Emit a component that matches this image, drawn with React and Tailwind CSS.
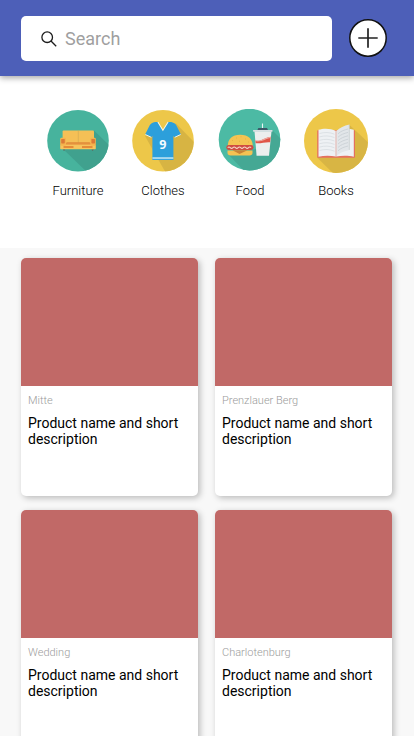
import React from "react";

function FurnitureIcon() {
  return (
    <svg viewBox="0 0 64 64" className="block h-16 w-16">
      <defs>
        <clipPath id="furnitureClip"><circle cx="32" cy="31.800" r="30.800" /></clipPath>
      </defs>
      <circle cx="32" cy="31.800" r="30.800" fill="#47b39d" />
      <path clipPath="url(#furnitureClip)" d="M48 21.5 L66 39 V66 H44 L17 40 Z" fill="#40a18e" />
      <path d="M17 40h2.200l-.8 2h-.8zM45.500 40h2.200l-.7 2h-.8z" fill="#56766b" />
      <rect x="16.600" y="21.400" width="31.400" height="15" rx="1" fill="#f5c056" />
      <path d="M32.300 21.500V34" stroke="#cfa653" strokeWidth=".6" />
      <path d="M19.500 34.200 21 33.200h22.500l1.500 1V37h-25.500z" fill="#e08a3a" />
      <rect x="20" y="34.700" width="25" height="1.300" fill="#eda348" />
      <rect x="14.200" y="36" width="35.600" height="4.200" rx=".6" fill="#f7c45c" />
      <rect x="14.200" y="28.800" width="5.800" height="8" rx="1.200" fill="#f5b34d" />
      <rect x="44.300" y="28.800" width="5.500" height="8" rx="1.200" fill="#f5b34d" />
      <rect x="15.200" y="29.900" width="3.600" height="4.600" rx=".7" fill="#dc7a36" />
      <rect x="45.400" y="29.900" width="3.600" height="4.600" rx=".7" fill="#dc7a36" />
      <path d="M17.500 37h10v2h-10zM36 37h10.500v2H36z" fill="#e58c38" />
    </svg>
  );
}

function ClothesIcon() {
  return (
    <svg viewBox="0 0 64 64" className="block h-16 w-16">
      <defs>
        <clipPath id="clothesClip"><circle cx="32" cy="31.800" r="30.800" /></clipPath>
      </defs>
      <circle cx="32" cy="31.800" r="30.800" fill="#edc749" />
      <path clipPath="url(#clothesClip)" d="M45 14.500 L66 36 V66 H36 L14 27 Z" fill="#d7b443" />
      <g transform="translate(.7 0)">
        <path d="M23.500 13h3l4.700 8.500L36 13h3.500c3 .7 4.700 2 5.700 4.500l4 8-6.200 2.800-1.300-1.300V51h-21V27l-1.300 1.300-6-2.800 4-8c1-2.500 3.100-4 6.100-4.500Z" fill="#2c9fdb" />
        <path d="m13.600 25.500 6 2.800M49 25.500l-6 2.800" stroke="#f5f4e4" strokeWidth="1" />
        <path d="m26.200 13 5 8.300 5.200-8.300" fill="none" stroke="#fff6dc" strokeWidth="1.100" />
        <path d="m27.300 12.900 3.900 6.300 4-6.300Z" fill="#edc749" />
        <rect x="20.700" y="48.100" width="21" height="2" fill="#a6d8ef" />
        <text x="31.200" y="39.800" textAnchor="middle" fontFamily="Open Sans, sans-serif" fontWeight="700" fontSize="12.500" fill="#f4fbff">9</text>
      </g>
    </svg>
  );
}

function FoodIcon() {
  return (
    <svg viewBox="0 0 64 64" className="block h-16 w-16">
      <defs>
        <clipPath id="foodClip"><circle cx="31.500" cy="30.600" r="30.800" /></clipPath>
      </defs>
      <circle cx="31.500" cy="30.600" r="30.800" fill="#4cbaa4" />
      <path clipPath="url(#foodClip)" d="M54 21 L66 33 V66 H30 L10 45 L38 40 Z" fill="#45a894" />
      <path d="M9.500 41.500h25v2.300c0 1.800-1.200 2.600-3 2.600h-19c-1.800 0-3-.8-3-2.600Z" fill="#f4c252" />
      <path d="M14.500 41.200h15L21.500 45z" fill="#c98335" />
      <path d="M9.800 37c0-7 4.200-11.300 12.400-11.300S34.700 30 34.700 37Z" fill="#f4c452" />
      <path d="M14 31.500h1M18 29h1M22.500 27.800h1M27 30h1M21 32.300h1M30 33h1" stroke="#e3ae44" strokeWidth=".8" />
      <rect x="8.300" y="36" width="27.200" height="5" rx="2.400" fill="#d04c42" />
      <path d="M9.700 38.700q1.300-1.400 2.600 0t2.600 0 2.600 0 2.600 0 2.600 0 2.600 0 2.600 0 2.600 0 2.600 0" fill="none" stroke="#f5d8c7" strokeWidth="1.100" />
      <path d="M44.500 14.500V19.500" stroke="#eaf5f4" strokeWidth="1.100" />
      <path d="M40.300 19h8.700l1 2H39.500z" fill="#3d5868" />
      <path d="M36.500 22.300h17l-2.500 24.400H38.600Z" fill="#eceeee" />
      <rect x="35" y="20.900" width="19.600" height="1.800" rx=".6" fill="#d7dfe3" />
      <path d="M37.300 31.500c5.700 1.500 8.700-2.900 15.400-3.800l-.6 5.600c-4.300-.5-9.200 1.400-14.400.9Z" fill="#e05548" />
      <path d="M37.300 31.500c5.700 1.500 8.700-2.900 15.400-3.800l-.1 1.300c-5 .7-8 4-15.100 3.300Z" fill="#eeaaa2" />
    </svg>
  );
}

function BooksIcon() {
  return (
    <svg viewBox="0 0 64 64" className="block h-16 w-16">
      <defs>
        <clipPath id="booksClip"><circle cx="32" cy="32" r="32" /></clipPath>
      </defs>
      <circle cx="32" cy="32" r="32" fill="#edc749" />
      <path clipPath="url(#booksClip)" d="M45 15.500 L68 37 V68 H33 L13 48.500 Z" fill="#d8b544" />
      <rect x="13.200" y="21.200" width="37.800" height="27.500" rx=".7" fill="#e4705f" />
      <path d="M14.500 20.800c5-1.700 12-1.700 17.500 1.200v25.600c-5.500-1.200-12-1.200-17.500.1ZM32 22c5.500-2.900 12.500-2.900 17.800-1.200v26.900c-5.300-1.300-12.300-1.300-17.800-.1Z" fill="#eef1f4" />
      <path d="M32.600 22c3-3.500 7.500-5.200 12.800-6.500v25.500c-4.500 1.200-9.500 2.300-12.800 6Z" fill="#e2e6e9" />
      <path d="M15.500 24.500c5-1.400 10-1.400 15 .7M15.500 27.900c5-1.400 10-1.400 15 .7M15.500 31.300c5-1.400 10-1.400 15 .7M15.500 34.700c5-1.400 10-1.400 15 .7M15.500 38.100c5-1.400 10-1.400 15 .7M15.500 41.500c5-1.400 10-1.400 15 .7" fill="none" stroke="#dce1e5" strokeWidth="1" />
      <path d="M34 24.800c3-2.800 6-3.700 10-4.800M34 28.200c3-2.800 6-3.700 10-4.800M34 31.600c3-2.800 6-3.700 10-4.800M34 35c3-2.800 6-3.700 10-4.800M34 38.400c3-2.800 6-3.700 10-4.800M34 41.800c3-2.800 6-3.700 10-4.800" fill="none" stroke="#cdd3d8" strokeWidth="1" />
      <path d="M45.300 15.700v25.200" stroke="#c3c8c9" strokeWidth=".7" />
      <path d="M32 22v26" stroke="#dda19b" strokeWidth=".8" />
    </svg>
  );
}

const categories = [
  { label: "Furniture", Icon: FurnitureIcon },
  { label: "Clothes", Icon: ClothesIcon },
  { label: "Food", Icon: FoodIcon },
  { label: "Books", Icon: BooksIcon },
];

const products = ["Mitte", "Prenzlauer Berg", "Wedding", "Charlotenburg"];

function ProductCard({ place }) {
  return (
    <article className="h-[238px] overflow-hidden rounded-[5px] bg-white shadow-[2px_2px_6px_rgba(0,0,0,0.25)]">
      <div className="h-32 bg-[#c16967]" />
      <div className="px-[7px] pt-2">
        <p className="text-[11px] leading-[14px] font-light text-[#9b9b9b]">{place}</p>
        <h2 className="mt-[7px] text-[14px] leading-4 text-black">Product name and short description</h2>
      </div>
    </article>
  );
}

export default function App() {
  return (
    <div className="flex h-[736px] w-[414px] flex-col overflow-hidden bg-white font-[Roboto,sans-serif]">
      <header className="z-10 flex h-[76px] shrink-0 items-start bg-[#4d5fb8] pt-4 pl-[21px] shadow-[0_2px_6px_rgba(0,0,0,0.35)]">
        <label className="flex h-[45px] w-[311px] items-center rounded-[5px] bg-white pl-5">
          <svg viewBox="0 0 16 16" className="h-4 w-4 shrink-0" fill="none" stroke="#1c1c1c" strokeWidth="1.300">
            <circle cx="6.200" cy="6.200" r="5.300" />
            <path d="m10 10 5.200 5.200" />
          </svg>
          <span className="ml-2 text-[18px] leading-[22px] text-[#9f9f9f]">Search</span>
        </label>
        <button className="mt-[3px] ml-[17px]" aria-label="Add product">
          <svg viewBox="0 0 38 38" className="block h-[38px] w-[38px]">
            <circle cx="19" cy="19" r="18.200" fill="#fff" stroke="#111" strokeWidth="1.500" />
            <path d="M19 9.300v19.400M9.300 19h19.400" stroke="#222" strokeWidth="1.700" />
          </svg>
        </button>
      </header>
      <nav className="grid h-[172px] shrink-0 grid-cols-[86px_84px_90px_82px] px-[35px] pt-[33px]">
        {categories.map(({ label, Icon }) => (
          <div key={label} className="flex flex-col items-center">
            <Icon />
            <span className="mt-2.5 text-[13px] leading-4 font-light text-black">{label}</span>
          </div>
        ))}
      </nav>
      <main className="grid flex-1 grid-cols-[177px_177px] content-start gap-x-[17px] gap-y-3.5 bg-[#f8f8f8] pt-2.5 pl-[21px]">
        {products.map((place) => (
          <ProductCard key={place} place={place} />
        ))}
      </main>
    </div>
  );
}
